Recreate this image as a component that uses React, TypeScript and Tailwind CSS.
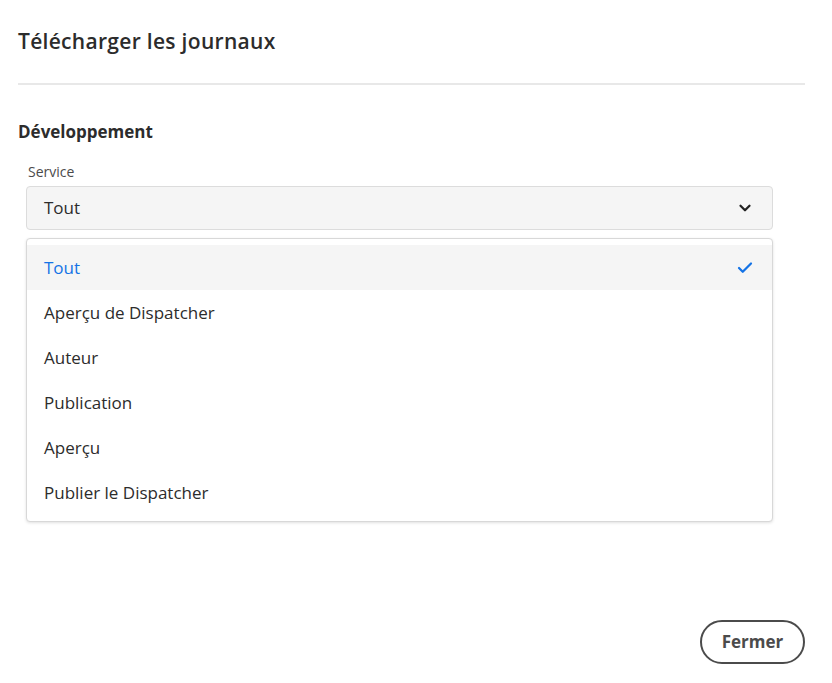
import { Check, ChevronDown } from "lucide-react";

const services = [
  "Tout",
  "Aperçu de Dispatcher",
  "Auteur",
  "Publication",
  "Aperçu",
  "Publier le Dispatcher",
];

export default function App() {
  const selected = "Tout";

  return (
    <main
      className="min-h-screen bg-white pl-[18px] pr-[27px] text-[#2c2c2c]"
      style={{ fontFamily: '"Open Sans", "Noto Sans", sans-serif' }}
    >
      <h1 className="pt-[28px] text-[21px] leading-[26px] font-semibold tracking-[0.3px]">
        Télécharger les journaux
      </h1>
      <div className="mt-[29px] h-[2px] bg-[#e8e8e8]" />

      <h2 className="mt-[36px] text-[17px] leading-[22px] font-bold">Développement</h2>

      <div className="ml-[8px] mr-[32px]">
        <label className="mt-[20px] block pl-[2px] text-[14px] leading-[18px] text-[#4b4b4b]">
          Service
        </label>
        <button
          type="button"
          className="mt-[5px] flex h-[44px] w-full items-center justify-between rounded-[4px] border border-[#dcdcdc] bg-[#f5f5f5] pl-[17px] pr-[18px] text-[17px] text-[#2c2c2c]"
        >
          <span>{selected}</span>
          <ChevronDown className="h-[18px] w-[18px] text-[#222222]" strokeWidth={3} />
        </button>

        <ul className="mt-[8px] rounded-[4px] border border-[#d8d8d8] bg-white py-[6px] shadow-[0_1px_3px_rgba(0,0,0,0.12)]">
          {services.map((s) => (
            <li
              key={s}
              className={
                s === selected
                  ? "flex h-[45px] items-center justify-between bg-[#f5f5f5] pl-[17px] pr-[18px] text-[17px] text-[#1473e6]"
                  : "flex h-[45px] items-center justify-between pl-[17px] pr-[18px] text-[17px] text-[#2c2c2c]"
              }
            >
              <span>{s}</span>
              {s === selected ? (
                <Check className="h-[18px] w-[18px] text-[#1473e6]" strokeWidth={3} />
              ) : null}
            </li>
          ))}
        </ul>
      </div>

      <div className="mt-[98px] flex justify-end">
        <button
          type="button"
          className="h-[44px] w-[105px] rounded-full border-2 border-[#4b4b4b] text-[17px] font-bold text-[#4b4b4b]"
        >
          Fermer
        </button>
      </div>
    </main>
  );
}
